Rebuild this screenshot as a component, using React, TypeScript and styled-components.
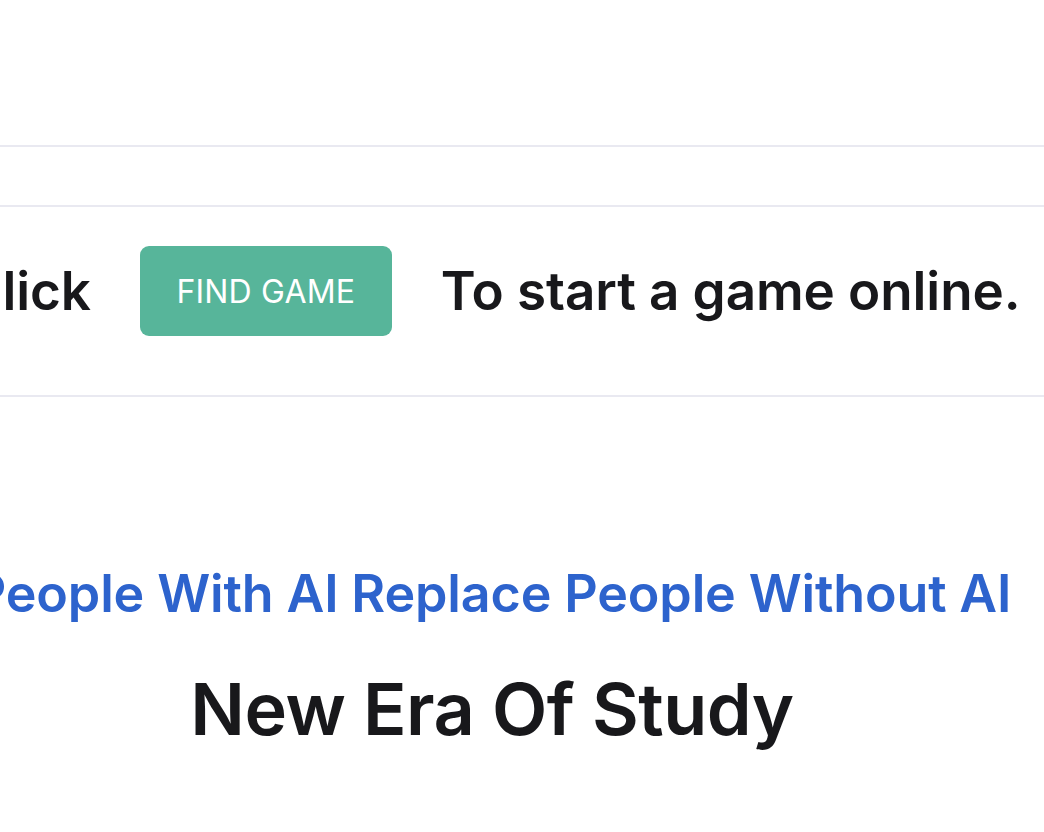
import React from "react";
import styled, { createGlobalStyle } from "styled-components";

const GlobalStyle = createGlobalStyle`
  html, body {
    margin: 0;
    padding: 0;
    background: #ffffff;
    overflow: hidden;
  }
  body {
    font-family: Inter, "Open Sans", Roboto, sans-serif;
    color: #18181b;
  }
`;

const Page = styled.div`
  width: 1044px;
  height: 832px;
  display: flex;
  flex-direction: column;
`;

const TopSpace = styled.div`
  height: 145px;
`;

const Divider = styled.div`
  height: 2px;
  background: #e9e9f1;
`;

const EmptyBand = styled.div`
  height: 58px;
`;

const GameRow = styled.div`
  height: 188px;
  box-sizing: border-box;
  padding: 0 60px 20px 0;
  display: flex;
  align-items: center;
  justify-content: center;
  gap: 49px;
`;

const RowText = styled.span`
  font-size: 53px;
  font-weight: 600;
  letter-spacing: -0.1px;
  white-space: nowrap;
  color: #18181b;
`;

const FindButton = styled.button`
  flex: 0 0 auto;
  width: 252px;
  height: 90px;
  border: none;
  border-radius: 9px;
  background: #57b59a;
  color: #ffffff;
  font-family: inherit;
  font-size: 32px;
  font-weight: 400;
  letter-spacing: 0.2px;
  cursor: pointer;
`;

const Hero = styled.div`
  padding-top: 165px;
  padding-right: 60px;
  display: flex;
  flex-direction: column;
  align-items: center;
`;

const Tagline = styled.div`
  font-size: 52px;
  font-weight: 600;
  color: #2d63cd;
  white-space: nowrap;
  letter-spacing: -0.15px;
`;

const Title = styled.h1`
  margin: 40px 0 0;
  font-size: 72px;
  font-weight: 600;
  color: #18181b;
  white-space: nowrap;
  letter-spacing: -0.5px;
`;

const App = () => {
  return (
    <>
      <GlobalStyle />
      <Page>
        <TopSpace />
        <Divider />
        <EmptyBand />
        <Divider />
        <GameRow>
          <RowText>Click</RowText>
          <FindButton>FIND GAME</FindButton>
          <RowText>To start a game online.</RowText>
        </GameRow>
        <Divider />
        <Hero>
          <Tagline>People With AI Replace People Without AI</Tagline>
          <Title>New Era Of Study</Title>
        </Hero>
      </Page>
    </>
  );
};

export default App;
